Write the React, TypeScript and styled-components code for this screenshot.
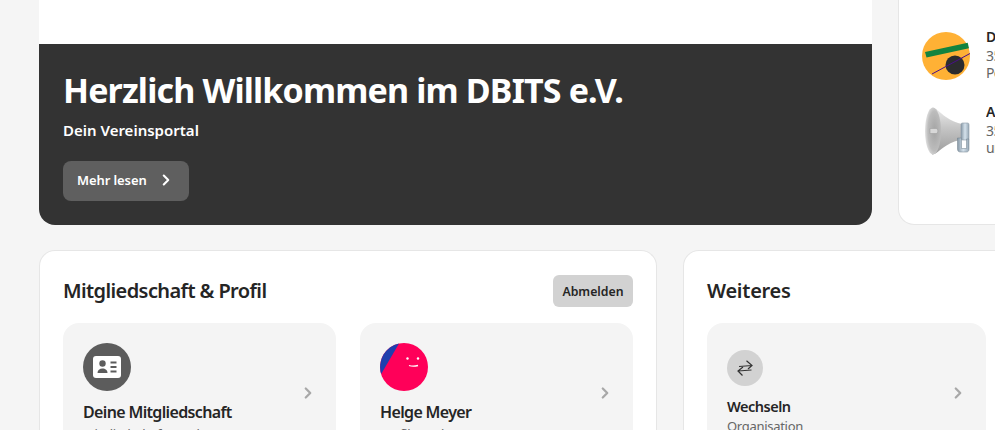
import styled, { createGlobalStyle } from 'styled-components';
import { ChevronRight } from 'lucide-react';

const GlobalStyle = createGlobalStyle`
  html, body {
    margin: 0;
    padding: 0;
    background: #f5f5f5;
    overflow: hidden;
  }
  body {
    font-family: "Noto Sans", "Open Sans", sans-serif;
    color: #252525;
  }
`;

const Page = styled.div`
  width: 995px;
  height: 430px;
  overflow: hidden;
  padding-left: 39px;
  box-sizing: border-box;
  display: flex;
  flex-direction: column;
  gap: 25px;
`;

const Row = styled.div<{ $first: string; $second: string; $gap: number }>`
  display: grid;
  grid-template-columns: ${(p) => p.$first} ${(p) => p.$second};
  gap: ${(p) => p.$gap}px;
  flex: none;
`;

const HeroCard = styled.section`
  background: #fff;
  border-radius: 0 0 16px 16px;
  height: 225px;
  padding-top: 44px;
  box-sizing: border-box;
  overflow: hidden;
`;

const HeroBody = styled.div`
  background: #333;
  height: 181px;
  padding: 24px;
  box-sizing: border-box;
  color: #fff;
`;

const HeroTitle = styled.h1`
  margin: 0;
  font-size: 34px;
  line-height: 44px;
  font-weight: 700;
  letter-spacing: -0.85px;
  white-space: nowrap;
`;

const HeroLead = styled.p`
  margin: 6px 0 0;
  font-size: 15px;
  line-height: 24px;
  font-weight: 600;
`;

const ReadMore = styled.button`
  margin-top: 19px;
  width: 126px;
  height: 40px;
  border: 0;
  border-radius: 8px;
  background: #5f5f5f;
  color: #fff;
  font: 600 13px "Noto Sans", sans-serif;
  letter-spacing: -0.1px;
  display: flex;
  align-items: center;
  justify-content: space-between;
  padding: 0 14px 2px;
`;

const NewsCard = styled.aside`
  background: #fff;
  border: 1px solid #e6e6e6;
  border-top: 0;
  border-radius: 0 0 0 16px;
  height: 225px;
  box-sizing: border-box;
  padding: 27px 0 0 23px;
  display: flex;
  flex-direction: column;
  gap: 18px;
`;

const NewsRow = styled.div`
  display: flex;
  gap: 16px;
  align-items: flex-start;
  height: 57px;
`;

const NewsThumb = styled.svg`
  width: 48px;
  height: 48px;
  flex: none;
  margin-top: 5px;
`;

const NewsText = styled.div`
  font-size: 14px;
  line-height: 17px;
  letter-spacing: -0.6px;
  color: #666;
  white-space: nowrap;
  width: 100px;
  overflow: hidden;
`;

const NewsTitle = styled.div`
  font-weight: 600;
  line-height: 20px;
  color: #252525;
`;

const Panel = styled.section`
  background: #fff;
  border: 1px solid #e6e6e6;
  border-bottom: 0;
  border-radius: 16px 16px 0 0;
  box-sizing: border-box;
  height: 180px;
  padding: 24px 23px 0;
  overflow: hidden;
`;

const PanelHead = styled.header`
  display: flex;
  align-items: center;
  justify-content: space-between;
  height: 32px;
  margin-bottom: 16px;
`;

const PanelTitle = styled.h2<{ $spacing: number }>`
  margin: 0 0 2px;
  font-size: 20px;
  font-weight: 600;
  letter-spacing: ${(p) => p.$spacing}px;
`;

const LogoutButton = styled.button`
  width: 80px;
  height: 32px;
  border: 0;
  border-radius: 6px;
  background: #d2d2d2;
  color: #252525;
  font: 600 12.3px "Noto Sans", sans-serif;
  padding: 0;
`;

const Tiles = styled.div`
  display: flex;
  gap: 24px;
`;

const Tile = styled.article`
  flex: 1;
  height: 130px;
  background: #f4f4f4;
  border-radius: 16px;
  box-sizing: border-box;
  padding: 20px 20px 0;
  display: flex;
  justify-content: space-between;
  align-items: flex-start;
`;

const TileMain = styled.div`
  display: flex;
  flex-direction: column;
`;

const TileTitle = styled.div`
  margin-top: 11px;
  font-size: 16px;
  line-height: 20px;
  font-weight: 600;
  letter-spacing: -0.65px;
  white-space: nowrap;
`;

const SmallTileTitle = styled(TileTitle)`
  font-size: 14.5px;
  line-height: 18px;
  letter-spacing: -0.5px;
`;

const TileSub = styled.div<{ $gap: number }>`
  margin-top: ${(p) => p.$gap}px;
  font-size: 13px;
  line-height: 18px;
  letter-spacing: -0.3px;
  color: #666;
  white-space: nowrap;
`;

const Round = styled.div<{ $size: number; $bg: string }>`
  width: ${(p) => p.$size}px;
  height: ${(p) => p.$size}px;
  border-radius: 50%;
  background: ${(p) => p.$bg};
  display: flex;
  align-items: center;
  justify-content: center;
`;

const SmallRound = styled(Round)`
  margin-top: 7px;
`;

const TileArrow = styled(ChevronRight)`
  margin: 41px -1px 0 0;
  color: #a8a8a8;
  flex: none;
`;

function ProfileCardIcon() {
  return (
    <svg width="28" height="22" viewBox="0 0 28 22">
      <rect width="28" height="22" rx="3" fill="#fff" />
      <circle cx="9.500" cy="7.500" r="3.200" fill="#5c5c5c" />
      <path d="M4.500 17c0-3 2.200-4.600 5-4.600s5 1.600 5 4.600z" fill="#5c5c5c" />
      <path d="M17.500 6.500h6M17.500 11h6M17.500 15.500h6" stroke="#5c5c5c" strokeWidth="1.800" />
    </svg>
  );
}

function AvatarIcon() {
  return (
    <svg width="48" height="48" viewBox="0 0 48 48">
      <circle cx="24" cy="24" r="24" fill="#ff0059" />
      <path d="M19 0.500A24 24 0 0 0 1.200 31z" fill="#1f3fae" />
      <circle cx="27.500" cy="15.500" r="1.200" fill="#fff" />
      <circle cx="38" cy="15.500" r="1.200" fill="#fff" />
      <path d="M29 22.500c2.500 .8 6 .8 9 0" stroke="#fff" strokeWidth="1.300" fill="none" />
    </svg>
  );
}

function SwapIcon() {
  return (
    <svg width="20" height="20" viewBox="0 0 20 20" fill="none" stroke="#333" strokeWidth="1.200">
      <path d="M4 8.500 17 7.500M11.500 2.800l5.500 4.700-4 3.500" />
      <path d="M16.500 12 3 13M8 9 3 13l4.500 4.500" />
    </svg>
  );
}

function ClubThumb() {
  return (
    <NewsThumb viewBox="0 0 48 48">
      <circle cx="24" cy="24" r="24" fill="#ffb135" />
      <path d="M3 20 45.700 10.700l1.300 5.600L4.500 25.500z" fill="#12833f" />
      <circle cx="33" cy="33" r="9.500" fill="#2c2c2e" />
      <path d="M10 42 48 21.500" stroke="#4a0f8a" strokeWidth="1" />
    </NewsThumb>
  );
}

function MegaphoneThumb() {
  return (
    <NewsThumb viewBox="0 0 48 48">
      <defs>
        <linearGradient id="horn" x1="0" y1="0" x2="0" y2="1">
          <stop offset="0" stopColor="#ececec" />
          <stop offset="0.450" stopColor="#c4c4c4" />
          <stop offset="1" stopColor="#9c9c9c" />
        </linearGradient>
        <radialGradient id="mouth" cx="0.600" cy="0.500" r="0.600">
          <stop offset="0" stopColor="#a4a4a4" />
          <stop offset="0.700" stopColor="#bcbcbc" />
          <stop offset="1" stopColor="#e2e2e2" />
        </radialGradient>
        <linearGradient id="handle" x1="0" y1="0" x2="1" y2="0">
          <stop offset="0" stopColor="#8798a6" />
          <stop offset="0.500" stopColor="#d5e2ec" />
          <stop offset="1" stopColor="#97a8b6" />
        </linearGradient>
      </defs>
      <path d="M10 0.500C14 0.500 18 6 24 10c5 3.500 11 6 16 7l.5 16c-5 0-11 2-16 5.500C18 42.500 14 47.500 10 47.500z" fill="url(#horn)" />
      <ellipse cx="11" cy="24" rx="8" ry="23.500" fill="url(#mouth)" />
      <path d="M8 21.500h7l1 2.500-1 2.500H8z" fill="#d8d8d8" stroke="#a0a0a0" strokeWidth="0.600" />
      <rect x="39" y="16" width="8" height="17" rx="1.500" fill="url(#handle)" stroke="#8b99a5" strokeWidth="0.600" />
      <path d="M35.500 31v11c0 2 1 3 3 3h6c1.500 0 2.500-1 2.500-3V32h-2.500v9.500h-5V31z" fill="url(#handle)" stroke="#6f7e8a" strokeWidth="0.500" />
    </NewsThumb>
  );
}

export default function App() {
  return (
    <>
      <GlobalStyle />
      <Page>
        <Row $first="833px" $second="328px" $gap={26}>
          <HeroCard>
            <HeroBody>
              <HeroTitle>Herzlich Willkommen im DBITS e.V.</HeroTitle>
              <HeroLead>Dein Vereinsportal</HeroLead>
              <ReadMore>
                Mehr lesen
                <ChevronRight size={18} strokeWidth={2.8} />
              </ReadMore>
            </HeroBody>
          </HeroCard>
          <NewsCard>
            <NewsRow>
              <ClubThumb />
              <NewsText>
                <NewsTitle>DBITS Mitglieder</NewsTitle>
                35 Mitglieder
                <br />
                Personen
              </NewsText>
            </NewsRow>
            <NewsRow>
              <MegaphoneThumb />
              <NewsText>
                <NewsTitle>Alle Mitglieder</NewsTitle>
                35 Mitglieder
                <br />
                und Gäste
              </NewsText>
            </NewsRow>
          </NewsCard>
        </Row>
        <Row $first="618px" $second="327px" $gap={26}>
          <Panel>
            <PanelHead>
              <PanelTitle $spacing={-0.6}>Mitgliedschaft &amp; Profil</PanelTitle>
              <LogoutButton>Abmelden</LogoutButton>
            </PanelHead>
            <Tiles>
              <Tile>
                <TileMain>
                  <Round $size={48} $bg="#5c5c5c">
                    <ProfileCardIcon />
                  </Round>
                  <TileTitle>Deine Mitgliedschaft</TileTitle>
                  <TileSub $gap={3}>Mitgliedschaft ansehen</TileSub>
                </TileMain>
                <TileArrow size={18} strokeWidth={3} />
              </Tile>
              <Tile>
                <TileMain>
                  <AvatarIcon />
                  <TileTitle>Helge Meyer</TileTitle>
                  <TileSub $gap={3}>Profil ansehen</TileSub>
                </TileMain>
                <TileArrow size={18} strokeWidth={3} />
              </Tile>
            </Tiles>
          </Panel>
          <Panel>
            <PanelHead>
              <PanelTitle $spacing={-0.25}>Weiteres</PanelTitle>
            </PanelHead>
            <Tiles>
              <Tile>
                <TileMain>
                  <SmallRound $size={36} $bg="#d2d2d2">
                    <SwapIcon />
                  </SmallRound>
                  <SmallTileTitle>Wechseln</SmallTileTitle>
                  <TileSub $gap={2}>Organisation</TileSub>
                </TileMain>
                <TileArrow size={18} strokeWidth={3} />
              </Tile>
            </Tiles>
          </Panel>
        </Row>
      </Page>
    </>
  );
}
